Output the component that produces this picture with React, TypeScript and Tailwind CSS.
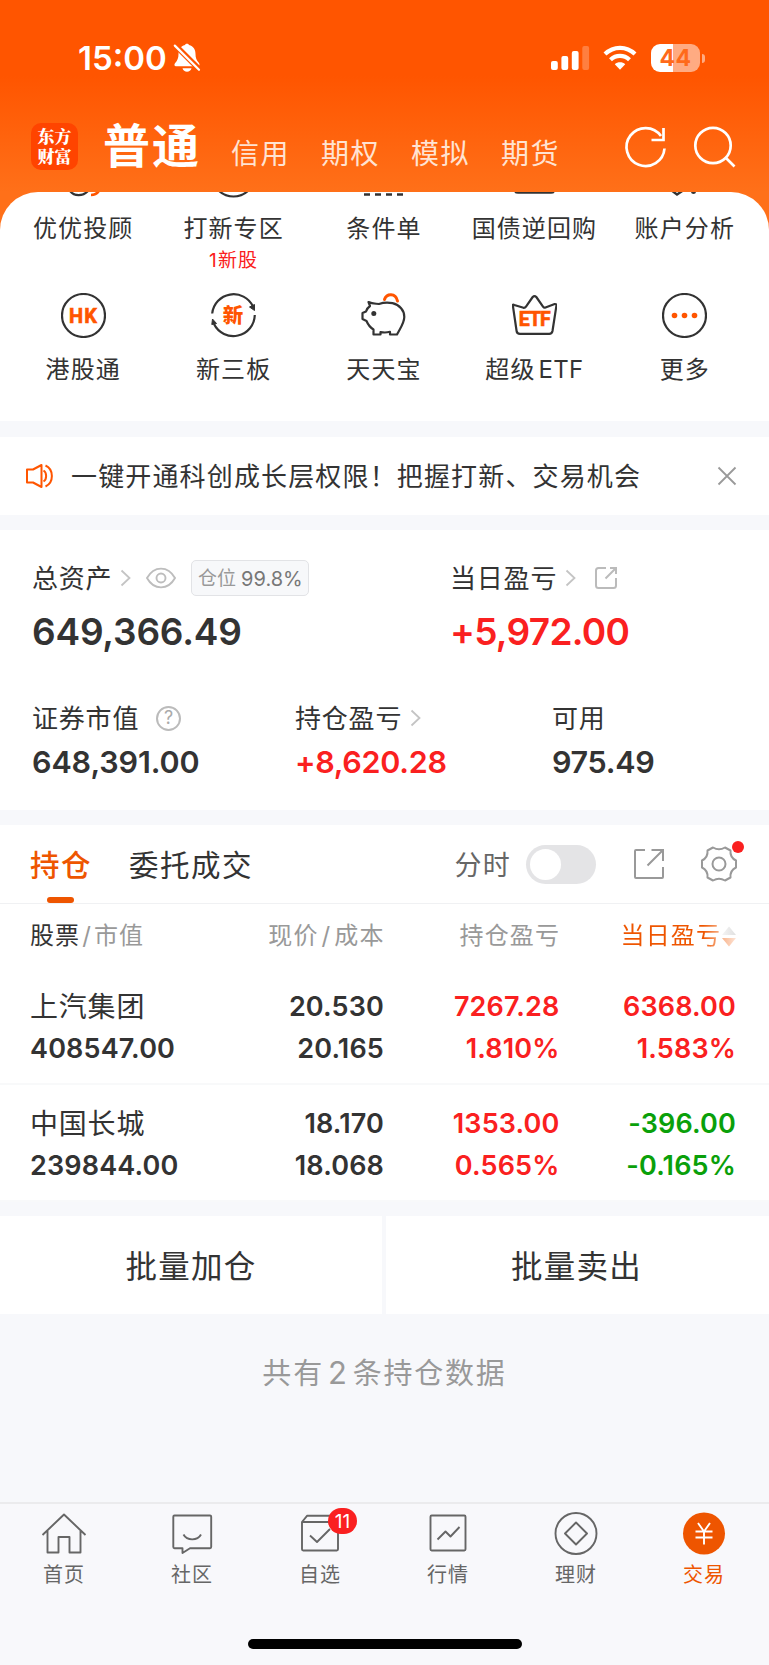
import type { ReactNode } from 'react';

const shortcutsTop = [
  {
    label: '优优投顾',
    icon: (
      <>
        <path d="M9 -1 C13 4.500 22 4.500 27 -1" stroke="#333" strokeWidth="2.200" />
        <path d="M30 3 C34 3 36.500 1.500 38.500 -2" stroke="#ff5500" strokeWidth="2.600" />
      </>
    ),
  },
  {
    label: '打新专区',
    note: '1新股',
    icon: <circle cx="22.500" cy="-17" r="21.500" stroke="#333" strokeWidth="2.200" />,
  },
  {
    label: '条件单',
    icon: <path d="M3 2.500h6M14 2.500h6M25 2.500h6M36 2.500h6" stroke="#333" strokeWidth="2.600" />,
  },
  {
    label: '国债逆回购',
    icon: <path d="M3 0 C4 0.700 5 0.700 6 0.700 H39 C40 0.700 41 0.700 42 0" stroke="#333" strokeWidth="2" />,
  },
  {
    label: '账户分析',
    icon: (
      <>
        <path d="M9 -2 L15 2.500 L21 -1.500" stroke="#333" strokeWidth="2.400" />
        <circle cx="31.500" cy="-0.500" r="2.500" fill="#333" />
      </>
    ),
  },
];

const shortcuts = [
  {
    label: '港股通',
    icon: (
      <>
        <circle cx="22.500" cy="22.500" r="21.500" stroke="#333" strokeWidth="2.200" />
        <text x="22.500" y="29.700" textAnchor="middle" fontFamily="Roboto, sans-serif" fontSize="20" fontWeight="700" fill="#ff5500" stroke="#ff5500" strokeWidth="0.600">HK</text>
      </>
    ),
  },
  {
    label: '新三板',
    icon: (
      <>
        <path d="M1.200 20.500 A21.500 21.500 0 0 1 42 13.500" stroke="#333" strokeWidth="2.200" />
        <path d="M43.800 22 A21.500 21.500 0 0 1 3 31" stroke="#333" strokeWidth="2.200" />
        <path d="M38.500 14 L43.500 11.500 L43.500 17.500 Z" fill="#333" stroke="#333" strokeWidth="1" />
        <path d="M0.800 31.500 L1.500 26 L5.500 30.500 Z" fill="#333" stroke="#333" strokeWidth="1" />
        <text x="22.500" y="29.500" textAnchor="middle" fontSize="20.500" fontWeight="800" fill="#ff5500">新</text>
      </>
    ),
  },
  {
    label: '天天宝',
    icon: (
      <>
        <path
          d="M7.500 9 C11.500 11.200 15 10.500 18 11 C22 9.600 27 9.300 31.500 10.200 C38.500 11.700 43.500 17.500 43.300 24 C43.200 30 40 34 36 41.500 H29 V38.800 C26 39.600 22 39.600 19.500 39 V41.500 H12.500 V36.500 C9 34.500 7 31.500 5.500 28 L1.500 26 V20 L5 18.500 C5.500 16.500 7 14.500 9 13 Z"
          stroke="#333"
          strokeWidth="2.200"
          strokeLinejoin="round"
        />
        <circle cx="12.800" cy="20.500" r="2.500" fill="#333" />
        <path d="M23.500 6.500 C25.500 0.500 34.500 -0.500 36.500 8" stroke="#ff5500" strokeWidth="3" strokeLinecap="round" />
      </>
    ),
  },
  {
    label: '超级',
    suffix: 'ETF',
    icon: (
      <>
        <path
          d="M2.300 12 L11.500 14.800 Q13 15 14 13.600 L20.700 4 Q22.500 2.200 24.300 4 L31 13.600 Q32 15 33.500 14.500 L42.700 11 Q44.700 10.800 44.400 12.800 L40.500 38 Q40 40.800 37.200 40.800 H8 Q5 40.800 4.600 38 L0.900 12.800 Q0.500 11 2.300 12 Z"
          stroke="#333"
          strokeWidth="2.200"
          strokeLinejoin="round"
        />
        <text x="22.200" y="33" textAnchor="middle" fontFamily="Roboto, sans-serif" fontSize="19.500" fontWeight="700" letterSpacing="-1" fill="#ff5500" stroke="#ff5500" strokeWidth="0.600">ETF</text>
      </>
    ),
  },
  {
    label: '更多',
    icon: (
      <>
        <circle cx="22.500" cy="22.500" r="21.500" stroke="#333" strokeWidth="2.200" />
        <circle cx="12.500" cy="22.500" r="2.800" fill="#ff5500" />
        <circle cx="22.500" cy="22.500" r="2.800" fill="#ff5500" />
        <circle cx="32.500" cy="22.500" r="2.800" fill="#ff5500" />
      </>
    ),
  },
];

const positions = [
  {
    name: '上汽集团',
    value: '408547.00',
    price: '20.530',
    cost: '20.165',
    profit: '7267.28',
    profitRate: '1.810%',
    day: '6368.00',
    dayRate: '1.583%',
    up: true,
  },
  {
    name: '中国长城',
    value: '239844.00',
    price: '18.170',
    cost: '18.068',
    profit: '1353.00',
    profitRate: '0.565%',
    day: '-396.00',
    dayRate: '-0.165%',
    up: false,
  },
];

const navItems = [
  {
    label: '首页',
    icon: (
      <path d="M1.500 23 L23 2.500 L44.500 23 M6.500 19 V40.500 H17.500 V25 H28.500 V40.500 H39.500 V19" />
    ),
  },
  {
    label: '社区',
    icon: (
      <>
        <path d="M5.500 3.500 H41 Q42.200 3.500 42.200 4.700 V35 Q42.200 36.200 41 36.200 H21 L13.500 41 V36.200 H5.500 Q4.300 36.200 4.300 35 V4.700 Q4.300 3.500 5.500 3.500 Z" />
        <path d="M14.500 22.500 C18 29 28.500 29 32 22.500" />
      </>
    ),
  },
  {
    label: '自选',
    badge: '11',
    icon: (
      <>
        <path d="M5 10 L10 3.800 H37 L41 10 M5 10 H41 V37.300 Q41 38.500 39.800 38.500 H6.200 Q5 38.500 5 37.300 Z" />
        <path d="M13 23.500 L20 30 L33 17" />
      </>
    ),
  },
  {
    label: '行情',
    icon: (
      <>
        <rect x="5.500" y="3.500" width="35" height="35" rx="1.200" />
        <path d="M12.500 27.500 L20.500 19.500 L25.500 24.500 L34.500 15" />
      </>
    ),
  },
  {
    label: '理财',
    icon: (
      <>
        <circle cx="23" cy="21.500" r="20.500" />
        <path d="M23 10.500 L34 21.500 L23 32.500 L12 21.500 Z" />
      </>
    ),
  },
  {
    label: '交易',
    active: true,
    icon: (
      <>
        <circle cx="23" cy="21.500" r="21" fill="#ee5500" stroke="none" />
        <path d="M17 11 L23 19.500 L29 11 M23 19.500 V32.500 M14.500 19.500 H31.500 M14.500 25.500 H31.500" stroke="#fff" />
      </>
    ),
  },
];

function Chevron() {
  return (
    <svg width="12" height="18" viewBox="0 0 12 18" fill="none" className="ml-[8px] shrink-0">
      <path d="M1.500 1.500 L9.500 9 L1.500 16.500" stroke="#c4c4c4" strokeWidth="1.800" />
    </svg>
  );
}

function Gap() {
  return <div className="h-[15px] shrink-0 bg-[#f7f8fb]" />;
}

function StatusBar() {
  return (
    <div className="flex h-[116px] items-center pl-[78px] pr-[64px] text-white">
      <span className="w-[95px] text-[33px] font-semibold leading-none">15:00</span>
      <svg width="28" height="30" viewBox="0 0 28 30" fill="#fff">
        <path d="M12 2 C12.500 0.300 15.500 0.300 16 2 C20.500 3.200 22.500 6.500 22.500 11 C22.500 15 23.500 17.500 26 20 C27 21.500 26.500 23.300 25 23.300 H3 C1.300 23.300 1 21.500 2 20.300 C4.500 17.500 5.500 15 5.500 11 C5.500 6.500 7.500 3.200 12 2 Z" />
        <path d="M9.500 25.300 H18.500 C17.500 29.800 10.500 29.800 9.500 25.300 Z" />
        <path d="M1.500 1.500 L27.500 27.500" stroke="#ff5500" strokeWidth="5.500" />
        <path d="M1.800 2.600 L26 26.800" stroke="#fff" strokeWidth="2.200" strokeLinecap="round" />
      </svg>
      <div className="ml-auto flex items-center">
        <svg width="39" height="26" viewBox="0 0 39 26" fill="#fff">
          <rect x="0" y="16" width="6.800" height="9" rx="2" />
          <rect x="10.400" y="11" width="6.800" height="14" rx="2" />
          <rect x="20.800" y="6" width="6.800" height="19" rx="2" />
          <rect x="31.300" y="1" width="6.800" height="24" rx="2" opacity="0.250" />
        </svg>
        <svg width="34" height="26" viewBox="0 0 34 26" className="ml-[13px]" fill="none" stroke="#fff">
          <path d="M2 9 C10.500 0.700 23.500 0.700 32 9" strokeWidth="4.200" />
          <path d="M7.500 14.800 C13 9.600 21 9.600 26.500 14.800" strokeWidth="4.200" />
          <path d="M11.800 19.300 C14.500 16.700 19.500 16.700 22.200 19.300 L17 24.800 Z" fill="#fff" stroke="none" />
        </svg>
        <div className="ml-[14px] flex h-7 w-[49px] items-center justify-center rounded-[9px] bg-[linear-gradient(90deg,#fff_45%,#ffab82_45%)] text-[23px] font-bold leading-none tracking-[0.500px] text-[#ff6a1a]">
          44
        </div>
        <div className="ml-[2px] h-[9px] w-[3px] rounded-r-full bg-[#ffab82]" />
      </div>
    </div>
  );
}

function AccountTabs() {
  return (
    <div className="flex h-[76px] items-start pl-[31px]">
      <div className="mt-[7px] flex size-[47px] items-center justify-center rounded-[10px] bg-[#ff4400] text-center font-['Inter','Noto_Serif_CJK_SC','Noto_Sans_CJK_SC',serif] text-[17px] font-black leading-[20px] text-white">
        <p>
          东方
          <br />
          财富
        </p>
      </div>
      <span className="ml-[25px] mt-[6px] whitespace-nowrap text-[47px] font-bold leading-[48px] tracking-[2px] text-white">普通</span>
      <div className="ml-[30px] mt-[18px] flex whitespace-nowrap text-[28px] leading-[40px] tracking-[1.500px] text-[#ffe3d2]">
        <span className="w-[90px]">信用</span>
        <span className="w-[90px]">期权</span>
        <span className="w-[90px]">模拟</span>
        <span className="w-[90px]">期货</span>
      </div>
      <svg width="46" height="46" viewBox="0 0 46 46" className="ml-[32px] mt-[8px] shrink-0" fill="none" stroke="#fff" strokeWidth="2.700">
        <path d="M41.500 24.500 A19 19 0 1 1 38 12" />
        <path d="M40.500 4 V16 H28.500" />
      </svg>
      <svg width="46" height="46" viewBox="0 0 46 46" className="ml-[22px] mt-[8px] shrink-0" fill="none" stroke="#fff" strokeWidth="2.700">
        <circle cx="22" cy="21.500" r="17.700" />
        <path d="M34.500 33.500 L43.500 42.500" />
      </svg>
    </div>
  );
}

function ShortcutIcon({ height, children }: { height: number; children: ReactNode }) {
  return (
    <svg width="45" height={height} viewBox={`0 0 45 ${height}`} fill="none" className="mx-auto">
      {children}
    </svg>
  );
}

function Shortcuts() {
  return (
    <div className="h-[229px] overflow-hidden rounded-t-[38px] bg-white pl-2 pr-[9px] text-center text-2xl leading-[30px] tracking-[1.100px] text-[#333]">
      <div className="grid h-[101px] grid-cols-5">
        {shortcutsTop.map(item => (
          <div key={item.label} className="whitespace-nowrap">
            <ShortcutIcon height={8}>{item.icon}</ShortcutIcon>
            <div className="mt-[14px]">{item.label}</div>
            {item.note && <div className="mt-[3px] text-[19px] leading-7 text-[#fa2020]">{item.note}</div>}
          </div>
        ))}
      </div>
      <div className="grid grid-cols-5">
        {shortcuts.map(item => (
          <div key={item.label}>
            <ShortcutIcon height={45}>{item.icon}</ShortcutIcon>
            <div className="mt-[17px]">
              {item.label}
              {item.suffix && <span className="ml-[3px] tracking-[0.300px]">{item.suffix}</span>}
            </div>
          </div>
        ))}
      </div>
    </div>
  );
}

function Notice() {
  return (
    <div className="flex h-[78px] items-center bg-white pl-[25px] pr-[32px]">
      <svg width="30" height="26" viewBox="0 0 30 26" fill="none" stroke="#ff5500" strokeWidth="2" className="shrink-0">
        <path d="M2 6.500 H8 L16.500 2 V24 L8 19.500 H2 Z" strokeLinejoin="round" />
        <path d="M18.500 7.500 C22 9.500 22 16.500 18.500 18.500" />
        <path d="M20.500 2.500 C29 6.500 29 19.500 20.500 23.500" />
      </svg>
      <span className="ml-[16px] whitespace-nowrap pt-px text-[26px] leading-9 tracking-[1.150px] text-[#333]">一键开通科创成长层权限！把握打新、交易机会</span>
      <svg width="20" height="20" viewBox="0 0 20 20" stroke="#999" strokeWidth="1.800" className="ml-auto">
        <path d="M1.500 1.500 L18.500 18.500 M18.500 1.500 L1.500 18.500" />
      </svg>
    </div>
  );
}

function Assets() {
  return (
    <div className="h-[280px] bg-white pl-8 pt-[28px] text-[26px] tracking-[0.800px] text-[#333]">
      <div className="grid grid-cols-[418px_1fr]">
        <div>
          <div className="flex h-10 items-center whitespace-nowrap">
            总资产
            <Chevron />
            <svg width="30" height="22" viewBox="0 0 30 22" fill="none" stroke="#bdbdbd" strokeWidth="1.900" className="ml-[14px]">
              <path d="M1 11 C8 -1.500 22 -1.500 29 11 C22 23.500 8 23.500 1 11 Z" />
              <circle cx="15" cy="11" r="4.500" />
            </svg>
            <div className="ml-[15px] flex h-9 w-[118px] items-center justify-center rounded-[5px] border border-[#e2e3e6] bg-[#f7f8fa] pt-px text-[19px] tracking-normal text-[#999]">
              <span className="pt-[2px]">仓位</span>
              <span className="ml-[5px] text-[20px] text-[#777]">99.8%</span>
            </div>
          </div>
          <div className="mt-[11px] text-[37px] font-semibold leading-[46px] tracking-[-0.200px]">649,366.49</div>
        </div>
        <div>
          <div className="flex h-10 items-center whitespace-nowrap">
            当日盈亏
            <Chevron />
            <svg width="24" height="24" viewBox="0 0 24 24" fill="none" stroke="#bbb" strokeWidth="2" className="ml-[17px]">
              <path d="M12 2 H4.500 Q2 2 2 4.500 V19.500 Q2 22 4.500 22 H19.500 Q22 22 22 19.500 V12" />
              <path d="M11.500 12.500 L22 2 M16 2 H22 V8" />
            </svg>
          </div>
          <div className="mt-[11px] text-[37px] font-semibold leading-[46px] tracking-[-0.700px] text-[#fa2020]">+5,972.00</div>
        </div>
      </div>
      <div className="mt-[43px] grid grid-cols-[263px_257px_1fr]">
        <div>
          <div className="flex h-10 items-center">
            证券市值
            <span className="ml-[17px] flex size-[25px] items-center justify-center rounded-full border-2 border-[#bbb] text-[18px] leading-none tracking-normal text-[#aaa]">?</span>
          </div>
          <div className="mt-[4px] text-[30.500px] font-semibold leading-10 tracking-[-0.100px]">648,391.00</div>
        </div>
        <div>
          <div className="flex h-10 items-center">
            持仓盈亏
            <Chevron />
          </div>
          <div className="mt-[4px] text-[30.500px] font-semibold leading-10 tracking-[-0.300px] text-[#fa2020]">+8,620.28</div>
        </div>
        <div>
          <div className="flex h-10 items-center">可用</div>
          <div className="mt-[4px] text-[30.500px] font-semibold leading-10 tracking-[-0.300px]">975.49</div>
        </div>
      </div>
    </div>
  );
}

function PositionTabs() {
  return (
    <div className="flex h-[79px] items-center border-b border-[#f0f1f3] bg-white pl-[30px] pr-[30px] text-[29.500px] tracking-[1.500px] text-[#333]">
      <div className="relative flex h-full items-center pt-[2px] font-medium text-[#ee5500]">
        持仓
        <span className="absolute bottom-0 left-[17px] h-[6px] w-[27px] rounded-[3px] bg-[#ee5500]" />
      </div>
      <span className="ml-[37px] pt-[2px]">委托成交</span>
      <span className="ml-auto pt-[4px] text-[27px] tracking-[1.200px] text-[#666]">分时</span>
      <div className="ml-[15px] flex h-[39px] w-[70px] items-center rounded-full bg-[#e4e4e6] pl-[4px]">
        <span className="size-[31px] rounded-full bg-white" />
      </div>
      <svg width="32" height="32" viewBox="0 0 32 32" fill="none" stroke="#999" strokeWidth="2" className="ml-[37px]">
        <path d="M12 2 H3 Q2 2 2 3 V29 Q2 30 3 30 H29 Q30 30 30 29 V19" />
        <path d="M14.500 17.500 L30 2 M18.500 2 H30 V13" />
      </svg>
      <div className="relative ml-[34px]">
        <svg width="40" height="38" viewBox="0 0 40 38" fill="none" stroke="#999" strokeWidth="2" strokeLinejoin="round">
          <path d="M14 2.500 C17.500 4.500 22.500 4.500 26 2.500 L31.500 5.500 C31 10.500 33 13.500 37 15.500 V22.500 C33 24.500 31 27.500 31.500 32.500 L26 35.500 C22.500 33.500 17.500 33.500 14 35.500 L8.500 32.500 C9 27.500 7 24.500 3 22.500 V15.500 C7 13.500 9 10.500 8.500 5.500 Z" />
          <circle cx="20" cy="19" r="6.500" />
        </svg>
        <span className="absolute -top-[4px] left-[33px] size-3 rounded-full bg-[#fa2020]" />
      </div>
    </div>
  );
}

function Positions() {
  return (
    <div className="bg-white text-[#333]">
      <div className="grid h-[64px] grid-cols-[200px_154.500px_175.500px_1fr] items-center pl-[30px] pr-[32px] text-right text-2xl tracking-[1.100px] text-[#999]">
        <div className="text-left">
          <span className="text-[#333]">股票</span>
          <span className="mx-[2px]">/</span>市值
        </div>
        <div>
          现价<span className="mx-[3px]">/</span>成本
        </div>
        <div>持仓盈亏</div>
        <div className="flex items-center justify-end whitespace-nowrap">
          <span className="bg-[linear-gradient(90deg,#ee5500_82%,#f7b48d)] bg-clip-text text-transparent">当日盈亏</span>
          <svg width="16" height="21" viewBox="0 0 16 21">
            <defs>
              <linearGradient id="sortUp" x1="0" y1="0" x2="1" y2="0">
                <stop offset="0" stopColor="#f4f4f4" />
                <stop offset="1" stopColor="#e0e0e0" />
              </linearGradient>
              <linearGradient id="sortDown" x1="0" y1="0" x2="1" y2="0">
                <stop offset="0" stopColor="#f9b48c" />
                <stop offset="1" stopColor="#fde4d6" />
              </linearGradient>
            </defs>
            <path d="M8 0.500 L15 9 H1 Z" fill="url(#sortUp)" />
            <path d="M8 20.500 L15 12 H1 Z" fill="url(#sortDown)" />
          </svg>
        </div>
      </div>
      {positions.map(row => (
        <div
          key={row.name}
          className="grid h-[117px] grid-cols-[200px_154px_175.500px_1fr] border-b-2 border-[#f8f9fa] pl-[30px] pr-[33px] pt-[17.500px] text-right text-[27px] font-semibold leading-[42px] tracking-[0.150px]"
        >
          <div className="text-left">
            <div className="text-[28px] font-normal tracking-[0.800px]">{row.name}</div>
            <div>{row.value}</div>
          </div>
          <div>
            <div>{row.price}</div>
            <div>{row.cost}</div>
          </div>
          <div className="text-[#fa2020]">
            <div>{row.profit}</div>
            <div>{row.profitRate}</div>
          </div>
          <div className={row.up ? 'text-[#fa2020]' : 'text-[#0aa00a]'}>
            <div>{row.day}</div>
            <div>{row.dayRate}</div>
          </div>
        </div>
      ))}
    </div>
  );
}

function BottomNav() {
  return (
    <div className="mt-auto h-[163px] border-t-2 border-[#ebebed] bg-[#f8f8fb]">
      <div className="flex pt-[8px]">
        {navItems.map(item => (
          <div key={item.label} className="flex w-[128px] flex-col items-center">
            <div className="relative">
              <svg width="46" height="44" viewBox="0 0 46 44" fill="none" stroke="#666" strokeWidth="1.900" strokeLinejoin="round">
                {item.icon}
              </svg>
              {item.badge && (
                <span className="absolute -top-[4px] left-[31px] flex h-[26px] w-[29px] items-center justify-center rounded-full bg-[#fa2020] text-[19px] leading-none text-white">
                  {item.badge}
                </span>
              )}
            </div>
            <span className={`mt-[4px] text-[20px] leading-[31px] tracking-[1px] ${item.active ? 'text-[#ee5500]' : 'text-[#666]'}`}>
              {item.label}
            </span>
          </div>
        ))}
      </div>
      <div className="mx-auto mt-[48px] h-[10px] w-[274px] rounded-full bg-black" />
    </div>
  );
}

export default function App() {
  return (
    <div className="flex h-[1665px] w-[769px] flex-col overflow-hidden bg-[#f7f8fb] font-['Inter','Noto_Sans_CJK_SC',sans-serif]">
      <div className="bg-[linear-gradient(180deg,#ff5500_0px,#ff5500_76px,#ff7019_192px,#ff7019_240px)]">
        <StatusBar />
        <AccountTabs />
        <Shortcuts />
      </div>
      <div className="h-4 shrink-0" />
      <Notice />
      <Gap />
      <Assets />
      <Gap />
      <PositionTabs />
      <Positions />
      <div className="mt-[14px] grid h-[98px] grid-cols-[382px_1fr] gap-[4px] text-[31.500px] tracking-[1.200px] text-[#333]">
        <button className="bg-white pt-[3px]">批量加仓</button>
        <button className="bg-white pt-[3px] pr-[2px]">批量卖出</button>
      </div>
      <div className="mt-[38px] text-center text-[29px] leading-[42px] tracking-[1.800px] text-[#999]">
        共有<span className="mx-[4px] text-[31px]">2</span>条持仓数据
      </div>
      <BottomNav />
    </div>
  );
}
